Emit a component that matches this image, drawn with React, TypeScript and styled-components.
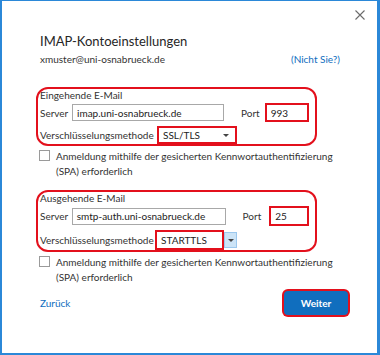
import React from 'react';
import styled, { createGlobalStyle } from 'styled-components';

const GlobalStyle = createGlobalStyle`
  html, body {
    margin: 0;
    padding: 0;
    background: #ffffff;
  }
  body {
    font-family: Lato, 'Open Sans', sans-serif;
    color: #333333;
  }
`;

const Dialog = styled.div`
  box-sizing: border-box;
  width: 380px;
  height: 355px;
  border: 2px solid #2b88d8;
  border-top-width: 1px;
  border-right-width: 3px;
  background: #ffffff;
  display: flex;
  flex-direction: column;
`;

const TopBar = styled.div`
  display: flex;
  justify-content: flex-end;
  padding: 8px 11px 0 0;
  height: 23px;
`;

const CloseButton = styled.button`
  width: 12px;
  height: 12px;
  padding: 0;
  border: none;
  background: transparent;
  display: flex;
  align-items: center;
  justify-content: center;
`;

const Body = styled.div`
  padding: 0 0 0 34px;
  display: flex;
  flex-direction: column;
`;

const Title = styled.h1`
  margin: 0 0 0 4px;
  font-size: 13px;
  font-weight: 400;
  line-height: 18px;
  color: #262626;
`;

const AccountRow = styled.div`
  display: flex;
  justify-content: space-between;
  width: 300px;
  margin: 2px 0 0 4px;
  font-size: 10px;
  line-height: 14px;
`;

const Link = styled.a<{ $size?: number }>`
  color: #106ebe;
  text-decoration: none;
  font-size: ${(p) => p.$size ?? 10}px;
  cursor: pointer;
`;

const Group = styled.div<{ $top: number }>`
  box-sizing: border-box;
  width: 281px;
  margin-top: ${(p) => p.$top}px;
  border: 2px solid #e3101c;
  border-radius: 12px;
  padding: 0 6px 0 2px;
  display: flex;
  flex-direction: column;
  gap: 4px;
`;

const GroupHeading = styled.div`
  font-size: 10px;
  line-height: 12px;
  margin-bottom: -2px;
`;

const Row = styled.div`
  display: flex;
  align-items: center;
  font-size: 10px;
`;

const Label = styled.span<{ $width?: number; $gap?: number; $lead?: number }>`
  display: inline-block;
  width: ${(p) => (p.$width ? `${p.$width}px` : 'auto')};
  margin-left: ${(p) => p.$lead ?? 0}px;
  margin-right: ${(p) => p.$gap ?? 0}px;
  white-space: nowrap;
`;

const TextField = styled.div<{ $width: number; $height: number; $marked?: boolean }>`
  box-sizing: border-box;
  width: ${(p) => p.$width}px;
  height: ${(p) => p.$height}px;
  border: ${(p) => (p.$marked ? '2px solid #e3101c' : '1px solid #a8a8a8')};
  padding-left: 4px;
  display: flex;
  align-items: center;
  font-size: 10px;
  color: #222222;
  background: #ffffff;
`;

const Select = styled.div<{ $width: number; $height: number }>`
  box-sizing: border-box;
  width: ${(p) => p.$width}px;
  height: ${(p) => p.$height}px;
  border: 2px solid #e3101c;
  padding: 0 6px 0 4px;
  display: flex;
  align-items: center;
  justify-content: space-between;
  font-size: 10px;
  color: #222222;
`;

const ArrowButton = styled.div`
  box-sizing: border-box;
  width: 13px;
  height: 16px;
  background: #cce4f7;
  border: 1px solid #9cc8ee;
  display: flex;
  align-items: center;
  justify-content: center;
`;

const Caret = styled.span`
  width: 0;
  height: 0;
  border-left: 3px solid transparent;
  border-right: 3px solid transparent;
  border-top: 3px solid #444444;
`;

const CheckRow = styled.div<{ $top: number }>`
  display: flex;
  align-items: flex-start;
  margin: ${(p) => p.$top}px 0 0 3px;
  font-size: 10px;
  line-height: 15px;
`;

const CheckBox = styled.span`
  box-sizing: border-box;
  flex: none;
  width: 11px;
  height: 11px;
  border: 1px solid #9a9a9a;
  margin: 1px 6px 0 0;
  background: #ffffff;
`;

const Footer = styled.div`
  display: flex;
  justify-content: space-between;
  align-items: center;
  width: 308px;
  margin: 6px 0 0 4px;
`;

const PrimaryButton = styled.button`
  box-sizing: border-box;
  width: 64px;
  height: 24px;
  border: none;
  border-radius: 4px;
  background: #106ebe;
  color: #ffffff;
  font-family: inherit;
  font-size: 10px;
  font-weight: 700;
  box-shadow: 0 0 0 2px #e3101c;
`;

const FieldRow: React.FC<{
  server: string;
  serverWidth: number;
  port: string;
  portLead: number;
  portGap: number;
  portWidth: number;
  portHeight: number;
}> = ({ server, serverWidth, port, portLead, portGap, portWidth, portHeight }) => (
  <Row>
    <Label $width={32}>Server</Label>
    <TextField $width={serverWidth} $height={17}>
      {server}
    </TextField>
    <Label $lead={portLead} $gap={portGap}>
      Port
    </Label>
    <TextField $width={portWidth} $height={portHeight} $marked>
      {port}
    </TextField>
  </Row>
);

export default function App() {
  return (
    <>
      <GlobalStyle />
      <Dialog>
        <TopBar>
          <CloseButton aria-label="Schließen">
            <svg width="10" height="10" viewBox="0 0 10 10">
              <path d="M0.5 0.5 L9.5 9.5 M9.5 0.5 L0.5 9.5" stroke="#6b6b6b" strokeWidth="1.1" />
            </svg>
          </CloseButton>
        </TopBar>
        <Body>
          <Title>IMAP-Kontoeinstellungen</Title>
          <AccountRow>
            <span>xmuster@uni-osnabrueck.de</span>
            <Link>(Nicht Sie?)</Link>
          </AccountRow>

          <Group $top={21}>
            <GroupHeading>Eingehende E-Mail</GroupHeading>
            <FieldRow
              server="imap.uni-osnabrueck.de"
              serverWidth={152}
              port="993"
              portLead={17}
              portGap={5}
              portWidth={44}
              portHeight={19}
            />
            <Row>
              <Label $width={117}>Verschlüsselungsmethode</Label>
              <Select $width={80} $height={18}>
                <span>SSL/TLS</span>
                <Caret />
              </Select>
            </Row>
          </Group>

          <CheckRow $top={3}>
            <CheckBox />
            <span>
              Anmeldung mithilfe der gesicherten Kennwortauthentifizierung
              <br />
              (SPA) erforderlich
            </span>
          </CheckRow>

          <Group $top={11}>
            <GroupHeading>Ausgehende E-Mail</GroupHeading>
            <FieldRow
              server="smtp-auth.uni-osnabrueck.de"
              serverWidth={155}
              port="25"
              portLead={17}
              portGap={8}
              portWidth={40}
              portHeight={20}
            />
            <Row>
              <Label $width={115}>Verschlüsselungsmethode</Label>
              <Select $width={69} $height={20}>
                <span>STARTTLS</span>
              </Select>
              <ArrowButton>
                <Caret />
              </ArrowButton>
            </Row>
          </Group>

          <CheckRow $top={3}>
            <CheckBox />
            <span>
              Anmeldung mithilfe der gesicherten Kennwortauthentifizierung
              <br />
              (SPA) erforderlich
            </span>
          </CheckRow>

          <Footer>
            <Link $size={10}>Zurück</Link>
            <PrimaryButton>Weiter</PrimaryButton>
          </Footer>
        </Body>
      </Dialog>
    </>
  );
}
